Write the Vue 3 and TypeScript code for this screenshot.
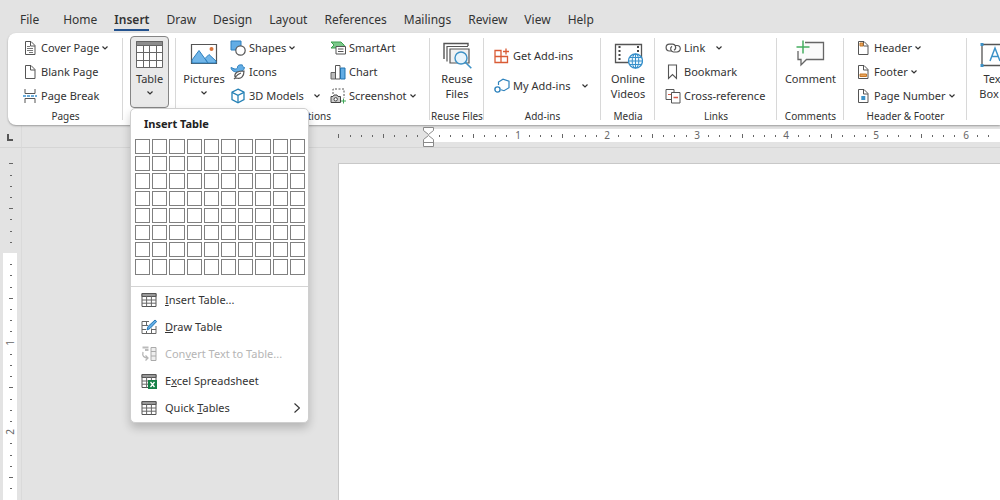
<script setup lang="ts">
import { computed, onBeforeUnmount, onMounted, ref } from 'vue'

interface Command {
  label: string
  icon: string
  arrow?: 'near' | 'far'
}

interface MenuEntry {
  before: string
  key: string
  after: string
  icon: string
  disabled?: boolean
  submenu?: boolean
}

interface Mark {
  at: number
  kind: 'number' | 'half' | 'dot'
  text: string
}

const tabs = ['File', 'Home', 'Insert', 'Draw', 'Design', 'Layout', 'References', 'Mailings', 'Review', 'View', 'Help']
const activeTab = ref('Insert')

const sheet = '<path d="M3.500 1.500h5.500l4 4v9h-9.500z" fill="#fff" stroke="#555"/><path d="M8.500 1.500v4.500h4.500" fill="none" stroke="#555"/>'

const gridIcon =
  '<path d="M1 1.500h14v13h-14z" fill="#fff" stroke="#555"/><path d="M1 1.500h14v3h-14z" fill="#999" stroke="#555"/><path d="M1 8h14M1 11.200h14M5.600 4v10.500M10.400 4v10.500" fill="none" stroke="#666"/>'

const icons: Record<string, string> = {
  cover: sheet + '<path d="M5 6.500h3M5 8.500h6M5 10.500h6M7 12.500h4" stroke="#777" fill="none"/>',
  blank: sheet,
  break:
    '<path d="M3 1v4.500h10V1M3 15v-4.500h10V15" fill="none" stroke="#555"/><path d="M1 8h14" stroke="#3d93cf" stroke-width="1.400" stroke-dasharray="3 1" fill="none"/>',
  shapes:
    '<path d="M1 1h10v9H1z" fill="#62ade5" stroke="#2d7fbd"/><circle cx="10.500" cy="10.500" r="4.700" fill="#fff" stroke="#555" stroke-width="1.200"/>',
  icons:
    '<path d="M1 3.500l2 .8c1 1 3.500 1 4.500-.3C7 1.500 9.500.3 12.500 1c-.5 1 .5 2 2 2.500-.5 3-3 4.500-6.500 4.500C4 8 1.500 7 1 3.500z" fill="#62ade5" stroke="#2d7fbd"/><path d="M5 13C4 8.500 8 7 14 7c0 5-2.500 8.500-7.500 7-1.200 0-2 .4-2.500 1M5 13.500c2-2.500 4-4 6-4.500" fill="#fff" stroke="#555" stroke-width="1.200"/>',
  models:
    '<path d="M8 1.200l6 3v7.300l-6 3.300-6-3.300V4.200z" fill="#fff" stroke="#2581b5" stroke-width="1.300"/><path d="M2 4.300l6 3 6-3M8 7.300v7.400" fill="none" stroke="#2581b5" stroke-width="1.300"/>',
  smartart:
    '<path d="M1 2h10l3.500 3.500L11 8H1l3-3z" fill="#7bc98a" stroke="#3c9f50"/><path d="M6 6.500h9.500v7.500H6z" fill="#fff" stroke="#555"/><path d="M8 9h5.500M8 11.500h5.500" stroke="#555" fill="none"/>',
  chart:
    '<path d="M1 8.500h4.500v6.500H1z" fill="#bbb" stroke="#666"/><path d="M5.500 1.500H10V15H5.500z" fill="#fff" stroke="#555"/><path d="M10.500 4H15v11h-4.500z" fill="#62ade5" stroke="#2172ae"/>',
  screenshot:
    '<path d="M3 6V1h11v9" fill="none" stroke="#555" stroke-dasharray="2 1.500"/><path d="M1 8.500h2l1-1.500h3l1 1.500h2.500v6H1z" fill="#ccc" stroke="#444"/><circle cx="5.700" cy="11.300" r="1.700" fill="#fff" stroke="#444"/><path d="M13.500 10.500v5M11 13h5" stroke="#3ca655" fill="none"/>',
  getaddins:
    '<path d="M1 2.500h6v12H1zM1 8.500h12.500v6H7v-12" fill="none" stroke="#d95b35" stroke-width="1.300"/><path d="M12 0.500v6M9 3.500h6" stroke="#d95b35" stroke-width="1.300" fill="none"/>',
  myaddins:
    '<path d="M4.500 7V4l4.500-2.800 6 2v6.500l-5 3-3-1" fill="none" stroke="#2f83bd" stroke-width="1.200"/><circle cx="3.500" cy="11.500" r="2.600" fill="#fff" stroke="#2f83bd" stroke-width="1.400"/>',
  link:
    '<path d="M6 11H4.500A3.200 3.200 0 0 1 4.500 4.200h3a3.200 3.200 0 0 1 1.500 6" fill="none" stroke="#555" stroke-width="1.200"/><path d="M10 5.500h2a3.200 3.200 0 0 1 0 6.500H8.500A3.200 3.200 0 0 1 7 6.200" fill="none" stroke="#555" stroke-width="1.200"/>',
  bookmark: '<path d="M3.500 1h8v13.500l-4-4-4 4z" fill="#fff" stroke="#555" stroke-width="1.100"/>',
  crossref:
    '<path d="M1 1.500h8v10H1z" fill="#fff" stroke="#555"/><path d="M3 6.500h3" stroke="#d65a48" fill="none"/><path d="M6.500 4.500h8.500v10.500H6.500z" fill="#fff" stroke="#555"/><path d="M8.500 9.500H13" stroke="#d65a48" stroke-width="1.500" fill="none"/>',
  header: sheet + '<path d="M5 3h3v3H5z" fill="#e9a45b" stroke="#c77a2a"/>',
  footer: sheet + '<path d="M5 10h6.500v2.500H5z" fill="#e9a45b" stroke="#c77a2a"/>',
  pagenumber: sheet + '<path d="M6.300 8h4v4h-4z" fill="#3c92c8"/>',
  grid: gridIcon,
  draw:
    '<path d="M8 2.500H1v12h14V7M1 6.500h6M1 10.500h4M5.500 2.500v4M5.500 12v2.500M10.500 9.500v5M10 10.500h5" fill="none" stroke="#666"/><path d="M6 11l1-3.500L14 1l1.700 1.500L9 9.500z" fill="#62ade5" stroke="#2577b5"/>',
  convert:
    '<path d="M1.500 1.500h6M4 4h3.500" stroke="#bbb" stroke-width="2" fill="none"/><path d="M10 1.500h5v13h-5zM10 5.500h5M10 10h5" fill="#eee" stroke="#aaa"/><path d="M2 6c-1 4 1 6 5 6M4.500 9.500L7 12l-2.500 2.500" fill="none" stroke="#b5b5b5" stroke-width="1.300"/>',
  excel:
    gridIcon +
    '<path d="M7 7h9v9H7z" fill="#168048"/><path d="M9.500 9l4 5M13.500 9l-4 5" stroke="#fff" stroke-width="1.300" fill="none"/>',
  table:
    '<path d="M1.500 1.500h26v26h-26z" fill="#fff" stroke="#666"/><path d="M1.500 1.500h26v4h-26z" fill="#8d8d8d" stroke="#666"/><path d="M1.500 12.500h26M1.500 20.500h26M8.500 5.500v22M14.500 5.500v22M21.500 5.500v22" fill="none" stroke="#666"/>',
  pictures:
    '<path d="M1.500 4.500h25v19h-25z" fill="#fff" stroke="#555" stroke-width="1.200"/><path d="M2 20l7-9.500 9 12.500H2z" fill="#71b6e9" stroke="#2d80be"/><path d="M15 18.500l4-4 7 6.500v2h-8z" fill="#71b6e9" stroke="#2d80be"/><circle cx="21.500" cy="9" r="2" fill="#d9743a"/>',
  reuse:
    '<path d="M1 19V3.500h24V6" fill="none" stroke="#555" stroke-width="1.400"/><path d="M4 21.500V6.500h21" fill="none" stroke="#555" stroke-width="1.200"/><path d="M7 9h19v14H7z" fill="#f1f1f1" stroke="#555" stroke-width="1.200"/><circle cx="18" cy="18" r="6" fill="#e7f4fc" stroke="#3d91c6" stroke-width="1.400"/><path d="M22.300 22.300l6 6" stroke="#3d91c6" stroke-width="1.600" fill="none"/>',
  video:
    '<path d="M1.500 4.500h26v18h-26z" fill="#fff" stroke="#555" stroke-width="1.300"/><path d="M5.500 6v15.500M24 6v8" fill="none" stroke="#444" stroke-width="2" stroke-dasharray="2 2"/><circle cx="21.500" cy="21" r="7" fill="#eaf6fd" stroke="#3790cb" stroke-width="1.300"/><path d="M14.500 21h14M21.500 14v14M16 17.500h11M16 24.500h11" fill="none" stroke="#3790cb"/><ellipse cx="21.500" cy="21" rx="3.300" ry="7" fill="none" stroke="#3790cb"/>',
  comment:
    '<path d="M9 2.500h18.500v17H10.500L5 25V19.500H2V11" fill="#fafafa" stroke="#666" stroke-width="1.300"/><path d="M7 .5v13M.5 7h13" stroke="#45ae60" stroke-width="1.500" fill="none"/>',
  textbox:
    '<path d="M2 4.500h26v21H2z" fill="#fff" stroke="#555" stroke-width="1.300"/><path d="M.5 3h3v3h-3zM.5 24h3v3h-3z" fill="#3c92c8"/><path d="M10 21l5-13 5 13M11.700 16.500h6.600" fill="none" stroke="#3c92c8" stroke-width="1.500"/>'
}

const pages: Command[] = [
  { label: 'Cover Page', icon: 'cover', arrow: 'near' },
  { label: 'Blank Page', icon: 'blank' },
  { label: 'Page Break', icon: 'break' }
]
const drawings: Command[] = [
  { label: 'Shapes', icon: 'shapes', arrow: 'near' },
  { label: 'Icons', icon: 'icons' },
  { label: '3D Models', icon: 'models', arrow: 'far' }
]
const figures: Command[] = [
  { label: 'SmartArt', icon: 'smartart' },
  { label: 'Chart', icon: 'chart' },
  { label: 'Screenshot', icon: 'screenshot', arrow: 'near' }
]
const addins: Command[] = [
  { label: 'Get Add-ins', icon: 'getaddins' },
  { label: 'My Add-ins', icon: 'myaddins', arrow: 'far' }
]
const links: Command[] = [
  { label: 'Link', icon: 'link', arrow: 'far' },
  { label: 'Bookmark', icon: 'bookmark' },
  { label: 'Cross-reference', icon: 'crossref' }
]
const headers: Command[] = [
  { label: 'Header', icon: 'header', arrow: 'near' },
  { label: 'Footer', icon: 'footer', arrow: 'near' },
  { label: 'Page Number', icon: 'pagenumber', arrow: 'near' }
]

interface Group {
  id: string
  title: string
  big?: { icon: string; lines: string[]; arrow?: 'below' | 'inline' }
  columns: Command[][]
}

const groups: Group[] = [
  { id: 'pages', title: 'Pages', columns: [pages] },
  { id: 'tables', title: '', big: { icon: 'table', lines: ['Table'], arrow: 'below' }, columns: [] },
  { id: 'illustrations', title: 'Illustrations', big: { icon: 'pictures', lines: ['Pictures'], arrow: 'below' }, columns: [drawings, figures] },
  { id: 'reuse', title: 'Reuse Files', big: { icon: 'reuse', lines: ['Reuse', 'Files'] }, columns: [] },
  { id: 'addins', title: 'Add-ins', columns: [addins] },
  { id: 'media', title: 'Media', big: { icon: 'video', lines: ['Online', 'Videos'] }, columns: [] },
  { id: 'links', title: 'Links', columns: [links] },
  { id: 'comments', title: 'Comments', big: { icon: 'comment', lines: ['Comment'] }, columns: [] },
  { id: 'headers', title: 'Header & Footer', columns: [headers] },
  { id: 'text', title: '', big: { icon: 'textbox', lines: ['Text', 'Box'], arrow: 'inline' }, columns: [] }
]

const entries: MenuEntry[] = [
  { before: '', key: 'I', after: 'nsert Table...', icon: 'grid' },
  { before: '', key: 'D', after: 'raw Table', icon: 'draw' },
  { before: 'Con', key: 'v', after: 'ert Text to Table...', icon: 'convert', disabled: true },
  { before: 'E', key: 'x', after: 'cel Spreadsheet', icon: 'excel' },
  { before: 'Quick ', key: 'T', after: 'ables', icon: 'grid', submenu: true }
]

const menuOpen = ref(true)
const columnCount = 10
const rowCount = 8

const INCH = 89.6
const RULER_LEFT = 22
const RULER_TOP = 148

function marks(zero: number, length: number): Mark[] {
  const list: Mark[] = []
  for (let i = -8; zero + (i * INCH) / 8 < length - 4; i++) {
    if (i === 0) continue
    const isNumber = i > 0 && i % 8 === 0
    list.push({
      at: Math.round(zero + (i * INCH) / 8),
      kind: isNumber ? 'number' : i % 4 === 0 ? 'half' : 'dot',
      text: isNumber ? String(i / 8) : ''
    })
  }
  return list
}

const viewWidth = ref(window.innerWidth)
const viewHeight = ref(window.innerHeight)

function measure() {
  viewWidth.value = window.innerWidth
  viewHeight.value = window.innerHeight
}

onMounted(() => window.addEventListener('resize', measure))
onBeforeUnmount(() => window.removeEventListener('resize', measure))

const acrossMarks = computed(() => marks(406, viewWidth.value - RULER_LEFT))
const downMarks = computed(() => marks(105, viewHeight.value - RULER_TOP))

function onBig(group: Group) {
  if (group.id === 'tables') menuOpen.value = !menuOpen.value
}
</script>

<template>
  <div class="app">
    <nav class="tabs" aria-label="Ribbon tabs">
      <button
        v-for="tab in tabs"
        :key="tab"
        type="button"
        class="tab"
        :class="{ active: tab === activeTab }"
        @click="activeTab = tab"
      >
        {{ tab }}
      </button>
    </nav>

    <div class="ribbon">
      <section v-for="group in groups" :key="group.id" class="group" :class="group.id">
        <div class="body">
          <div v-if="group.big" class="anchor">
            <button type="button" class="big" @click="onBig(group)">
              <svg class="big-icon" viewBox="0 0 29 29" aria-hidden="true" v-html="icons[group.big.icon]"></svg>
              <span v-for="(line, n) in group.big.lines" :key="line" class="line">
                {{ line }}
                <svg v-if="group.big.arrow === 'inline' && n === 1" class="arrow" viewBox="0 0 6 4" aria-hidden="true">
                  <path d="M.5 .5L3 3L5.500 .5" />
                </svg>
              </span>
              <svg v-if="group.big.arrow === 'below'" class="arrow below" viewBox="0 0 6 4" aria-hidden="true">
                <path d="M.5 .5L3 3L5.500 .5" />
              </svg>
            </button>

            <div v-if="group.id === 'tables' && menuOpen" class="menu">
              <h2 class="menu-title">Insert Table</h2>
              <div class="cells">
                <button
                  v-for="n in columnCount * rowCount"
                  :key="n"
                  type="button"
                  class="cell"
                  :aria-label="`${((n - 1) % columnCount) + 1} by ${Math.ceil(n / columnCount)} table`"
                ></button>
              </div>
              <div class="entries">
                <button
                  v-for="entry in entries"
                  :key="entry.after"
                  type="button"
                  class="entry"
                  :disabled="entry.disabled"
                >
                  <svg class="icon" viewBox="0 0 16 16" aria-hidden="true" v-html="icons[entry.icon]"></svg>
                  <span class="entry-text">{{ entry.before }}<u>{{ entry.key }}</u>{{ entry.after }}</span>
                  <svg v-if="entry.submenu" class="more" viewBox="0 0 6 10" aria-hidden="true">
                    <path d="M.5 .5L5.500 5L.5 9.500" />
                  </svg>
                </button>
              </div>
            </div>
          </div>

          <div v-for="(column, c) in group.columns" :key="c" class="column">
            <button v-for="item in column" :key="item.label" type="button" class="command">
              <svg class="icon" viewBox="0 0 16 16" aria-hidden="true" v-html="icons[item.icon]"></svg>
              <span>{{ item.label }}</span>
              <svg v-if="item.arrow" class="arrow" :class="item.arrow" viewBox="0 0 6 4" aria-hidden="true">
                <path d="M.5 .5L3 3L5.500 .5" />
              </svg>
            </button>
          </div>
        </div>
        <div class="caption">{{ group.title }}</div>
      </section>
    </div>

    <main class="workspace">
      <div class="corner">
        <svg class="tabstop" viewBox="0 0 6 7" aria-hidden="true"><path d="M1 0v6h5" /></svg>
      </div>
      <div class="across">
        <svg class="scale" aria-hidden="true">
          <rect x="406" y="4" width="100%" height="13" fill="#fff" />
          <template v-for="mark in acrossMarks" :key="mark.at">
            <text v-if="mark.kind === 'number'" :x="mark.at" y="14" text-anchor="middle">{{ mark.text }}</text>
            <rect v-else-if="mark.kind === 'half'" :x="mark.at" y="9" width="1" height="4" />
            <rect v-else :x="mark.at" y="10" width="1" height="2" />
          </template>
          <path class="marker" d="M401.500 2.500h10v3l-5 4-5-4z" />
          <path class="marker" d="M401.500 21.500v-7l5-4 5 4v7zM401.500 17.500h10" />
        </svg>
      </div>
      <div class="down">
        <svg class="scale" aria-hidden="true">
          <rect x="3" y="105" width="14" height="100%" fill="#fff" />
          <template v-for="mark in downMarks" :key="mark.at">
            <text
              v-if="mark.kind === 'number'"
              :transform="`translate(14 ${mark.at}) rotate(-90)`"
              text-anchor="middle"
            >{{ mark.text }}</text>
            <rect v-else-if="mark.kind === 'half'" x="9" :y="mark.at" width="4" height="1" />
            <rect v-else x="10" :y="mark.at" width="2" height="1" />
          </template>
        </svg>
      </div>
      <div class="canvas">
        <article class="page"></article>
      </div>
    </main>
  </div>
</template>

<style>
body {
  margin: 0;
  background: #e3e3e3;
}
</style>

<style scoped>
.app {
  display: flex;
  flex-direction: column;
  min-height: 100vh;
  overflow: hidden;
  background: #e3e3e3;
  color: #333;
  font-family: 'Noto Sans', 'Open Sans', sans-serif;
  font-size: 11px;
  line-height: 14px;
}

button {
  margin: 0;
  padding: 0;
  border: 0;
  background: none;
  color: inherit;
  font: inherit;
  white-space: nowrap;
}

.tabs {
  display: flex;
  gap: 17px;
  padding: 11px 20px 2px;
}

.tab {
  flex: none;
  height: 20px;
  box-sizing: border-box;
  border-bottom: 2px solid transparent;
  font-size: 12px;
  line-height: 18px;
}

.tab:first-child {
  margin-right: 7px;
}

.tab.active {
  border-bottom-color: #23528f;
  font-weight: 600;
}

.ribbon {
  position: relative;
  z-index: 1;
  display: flex;
  height: 92px;
  margin-left: 8px;
  border-radius: 8px 0 0 8px;
  background: #fff;
  box-shadow: 0 1px 2px #9c9c9c;
}

.group {
  position: relative;
  display: flex;
  flex: none;
  flex-direction: column;
  box-sizing: border-box;
  padding-top: 3px;
}

.group::after {
  content: '';
  position: absolute;
  top: 5px;
  right: 0;
  bottom: 5px;
  width: 1px;
  background: #d8d8d8;
}

.body {
  display: flex;
  height: 72px;
}

.caption {
  height: 17px;
  font-size: 10px;
  line-height: 17px;
  text-align: center;
  white-space: nowrap;
}

.pages { width: 115px; }
.tables { width: 53px; }
.illustrations { width: 254px; }
.reuse { width: 54px; }
.addins { width: 117px; }
.media { width: 54px; }
.links { width: 122px; }
.comments { width: 67px; }
.headers { width: 123px; }
.text { flex: 1 0 56px; }

.pages .body { padding-left: 14px; }
.tables .body { padding-left: 7px; }
.illustrations .body { padding-left: 5px; }
.addins .body { padding-left: 10px; }
.links .body { padding-left: 10px; }
.headers .body { padding-left: 11px; }
.reuse .body,
.media .body,
.comments .body { justify-content: center; }

.anchor {
  position: relative;
}

.big {
  display: flex;
  flex-direction: column;
  align-items: center;
  box-sizing: border-box;
  min-width: 46px;
  height: 72px;
  padding-top: 4px;
}

.tables .big {
  min-width: 39px;
  width: 39px;
  padding-top: 3px;
  border: 1px solid #858585;
  border-radius: 4px;
  background: #e9e9e9;
}

.text .big {
  min-width: 54px;
}

.big-icon {
  width: 29px;
  height: 29px;
  margin-bottom: 2px;
}

.line {
  display: flex;
  align-items: center;
  gap: 4px;
  height: 15px;
  line-height: 15px;
}

.arrow {
  flex: none;
  width: 6px;
  height: 4px;
}

.arrow path,
.more path {
  fill: none;
  stroke: #333;
  stroke-width: 1.2;
}

.arrow.below {
  margin-top: 5px;
}

.column {
  display: flex;
  flex-direction: column;
}

.illustrations .column {
  width: 90px;
  margin-right: 10px;
}

.illustrations .anchor {
  margin-right: 3px;
}

.addins .column {
  width: 94px;
  padding-top: 5px;
}

.addins .command {
  height: 30px;
}

.command {
  display: flex;
  align-items: center;
  gap: 3px;
  height: 24px;
}

.icon {
  flex: none;
  width: 16px;
  height: 16px;
}

.arrow.far {
  margin-left: auto;
}

.links .arrow.far {
  margin-left: 8px;
}

/* Only the table group rises above its neighbours, so its open menu covers them. */
.tables {
  z-index: 2;
}

.menu {
  position: absolute;
  z-index: 1;
  top: 100%;
  left: 0;
  width: 177px;
  border: 1px solid #cfcfcf;
  border-radius: 5px;
  background: #fff;
  box-shadow: 0 5px 10px rgba(0, 0, 0, 0.2);
}

.menu-title {
  margin: 0;
  padding: 8px 13px;
  font-size: 11px;
  line-height: 14px;
  font-weight: 700;
  color: #222;
}

.cells {
  display: grid;
  grid-template-columns: repeat(10, 1fr);
  gap: 2px;
  padding: 0 3px 11px 4px;
}

.cell {
  aspect-ratio: 1;
  border: 1px solid #808080;
  background: #fff;
}

.entries {
  display: flex;
  flex-direction: column;
  border-top: 1px solid #d4d4d4;
}

.entry {
  display: flex;
  align-items: center;
  gap: 8px;
  height: 27px;
  padding: 0 8px 0 10px;
}

.entry:disabled {
  color: #b5b5b5;
}

.entry u {
  text-underline-offset: 1px;
}

.more {
  width: 6px;
  height: 10px;
  margin-left: auto;
}

.workspace {
  display: grid;
  flex: 1;
  grid-template-columns: 22px 1fr;
  grid-template-rows: 23px 1fr;
}

.corner,
.across {
  border-bottom: 1px solid #d5d5d5;
}

.corner,
.down {
  border-right: 1px solid #dadada;
}

.corner {
  padding: 9px 0 0 7px;
}

.tabstop {
  display: block;
  width: 6px;
  height: 7px;
}

.tabstop path {
  fill: none;
  stroke: #555;
  stroke-width: 2;
}

.across,
.down {
  position: relative;
}

.scale {
  position: absolute;
  inset: 0;
  width: 100%;
  height: 100%;
  fill: #666;
  font-size: 10px;
}

.marker {
  fill: #fff;
  stroke: #8a8a8a;
}

.canvas {
  display: flex;
  padding: 15px 0 0 316px;
}

.page {
  flex: 1;
  border-top: 1px solid #c8c8c8;
  border-left: 1px solid #c8c8c8;
  background: #fff;
}
</style>
